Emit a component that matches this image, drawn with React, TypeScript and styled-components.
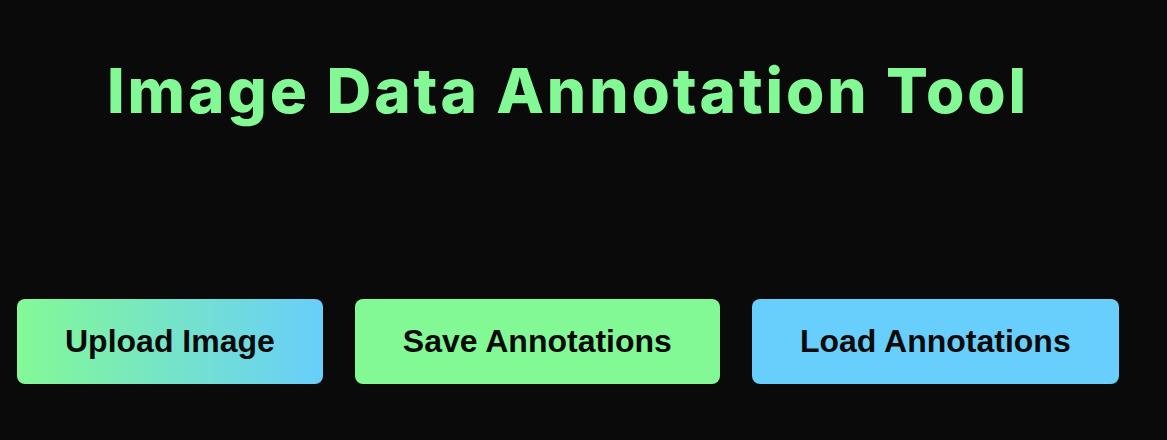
import React from "react";
import styled, { createGlobalStyle, css } from "styled-components";

const GREEN = "#83f996";
const BLUE = "#68cefb";

const Global = createGlobalStyle`
  html, body {
    margin: 0;
    padding: 0;
    background: #0a0a0a;
  }
  body {
    font-family: "Liberation Sans", Arial, sans-serif;
  }
`;

const Page = styled.main`
  width: 1102px;
  padding: 0 0 0 17px;
  height: 440px;
  box-sizing: content-box;
  display: flex;
  flex-direction: column;
`;

const Title = styled.h1`
  margin: 53px 0 0 0;
  text-align: center;
  font-family: Inter, "Noto Sans", sans-serif;
  font-weight: 800;
  font-size: 62px;
  line-height: 76px;
  letter-spacing: 2.9px;
  color: ${GREEN};
`;

const Toolbar = styled.div`
  margin-top: 170px;
  display: flex;
  gap: 32px;
`;

type Variant = "gradient" | "green" | "blue";

const ActionButton = styled.button<{ $variant: Variant }>`
  flex: none;
  white-space: nowrap;
  border: none;
  border-radius: 8px;
  padding: 24px 48px;
  font-family: "Liberation Sans", Arial, sans-serif;
  font-weight: 700;
  font-size: 32px;
  line-height: 37px;
  color: #0a0a0a;
  cursor: pointer;
  ${({ $variant }) =>
    $variant === "gradient"
      ? css`
          background: linear-gradient(90deg, ${GREEN}, ${BLUE});
        `
      : $variant === "green"
      ? css`
          background: ${GREEN};
        `
      : css`
          background: ${BLUE};
        `}
`;

export default function App() {
  return (
    <>
      <Global />
      <Page>
        <Title>Image Data Annotation Tool</Title>
        <Toolbar>
          <ActionButton $variant="gradient">Upload Image</ActionButton>
          <ActionButton $variant="green">Save Annotations</ActionButton>
          <ActionButton $variant="blue">Load Annotations</ActionButton>
        </Toolbar>
      </Page>
    </>
  );
}
